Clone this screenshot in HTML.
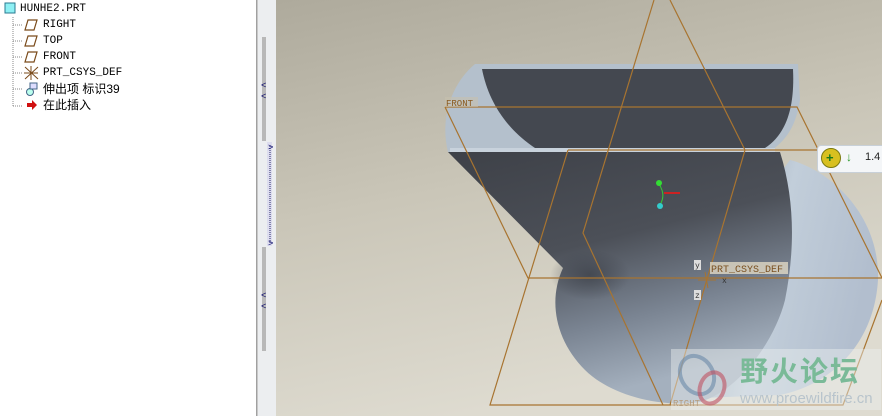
<!DOCTYPE html>
<html><head><meta charset="utf-8"><style>
body{margin:0;width:882px;height:416px;overflow:hidden;position:relative;font-family:"Liberation Mono","Noto Sans CJK SC",monospace;background:#fff}
.tree{position:absolute;left:0;top:0;width:256px;height:416px;background:#fff;border-right:1px solid #a0a0a0}
.it{position:absolute;font-size:11px;color:#000;line-height:14px;white-space:nowrap}
.cj{font-family:"Liberation Sans","Noto Sans CJK SC",sans-serif;font-size:12px}
</style></head><body>
<div class="tree">
<svg width="256" height="120" style="position:absolute;left:0;top:0">
<rect x="5" y="3" width="10" height="10" fill="#8ef0f4" stroke="#2a7a90"/>
<path d="M13 17V106M13 25H22M13 41H22M13 57H22M13 73H22M13 89H22M13 106H22" stroke="#888" stroke-dasharray="1 1" fill="none"/>
<path d="M25 30L28 20H37L34 30Z M25 46L28 36H37L34 46Z M25 62L28 52H37L34 62Z" fill="#fff" stroke="#7a4a1a" stroke-width="1.2"/>
<path d="M25 67L38 79M25 79L38 67M31 66V80M24 73H38" stroke="#7a4a1a"/>
<circle cx="30" cy="92" r="3.5" fill="#bfe" stroke="#468"/><rect x="30" y="83" width="7" height="6" fill="#ddf" stroke="#468"/>
<path d="M27 103h5v-3l5 5-5 5v-3h-5z" fill="#d01010"/>
</svg>
<div class="it" style="left:20px;top:2px">HUNHE2.PRT</div>
<div class="it" style="left:43px;top:18px">RIGHT</div>
<div class="it" style="left:43px;top:34px">TOP</div>
<div class="it" style="left:43px;top:50px">FRONT</div>
<div class="it" style="left:43px;top:66px">PRT_CSYS_DEF</div>
<div class="it cj" style="left:43px;top:82px">伸出项 标识39</div>
<div class="it cj" style="left:43px;top:98px">在此插入</div>
</div>
<div style="position:absolute;left:257px;top:0;width:19px;height:416px;background:#eceef0;border-left:1px solid #c8c8c8"></div>
<svg style="position:absolute;left:257px;top:0" width="19" height="416">
<rect x="5" y="37" width="4" height="104" fill="#b8b8b8"/><rect x="5" y="247" width="4" height="104" fill="#b8b8b8"/>
<rect x="10" y="142" width="5" height="104" fill="#dde"/>
<path d="M13 146V243" stroke="#226" stroke-dasharray="1 1"/>
<text x="4" y="88" font-size="9" fill="#006">&lt;</text><text x="4" y="99" font-size="9" fill="#006">&lt;</text>
<text x="4" y="298" font-size="9" fill="#006">&lt;</text><text x="4" y="309" font-size="9" fill="#006">&lt;</text>
<text x="11" y="150" font-size="9" fill="#006">&gt;</text><text x="11" y="246" font-size="9" fill="#006">&gt;</text>
</svg>
<svg style="position:absolute;left:276px;top:0" width="606" height="416" viewBox="276 0 606 416">
<defs>
<linearGradient id="bg" x1="0" y1="0" x2="0.3" y2="1"><stop offset="0" stop-color="#aeaa9c"/><stop offset="0.5" stop-color="#cac6b8"/><stop offset="1" stop-color="#dedbd0"/></linearGradient>
<linearGradient id="bd" x1="0" y1="0" x2="0.35" y2="1"><stop offset="0" stop-color="#3e4148"/><stop offset="0.45" stop-color="#4c5058"/><stop offset="0.75" stop-color="#7a8492"/><stop offset="1" stop-color="#a4b0be"/></linearGradient>
<linearGradient id="rt" x1="0" y1="0" x2="1" y2="0.3"><stop offset="0" stop-color="#8c98a8"/><stop offset="0.5" stop-color="#c2ceda"/><stop offset="1" stop-color="#b2bece"/></linearGradient>
<radialGradient id="sh" cx="0.5" cy="0.5" r="0.5"><stop offset="0" stop-color="#3a3e46" stop-opacity=".7"/><stop offset="1" stop-color="#3a3e46" stop-opacity="0"/></radialGradient>
</defs>
<rect x="276" y="0" width="606" height="416" fill="url(#bg)"/>
<!-- right light cylinder -->
<path d="M790 160 C830 170 880 215 878 280 C874 345 830 385 780 395 L700 398 L760 200Z" fill="url(#rt)"/>
<!-- body + bulb -->
<path d="M448 152 L780 152 C795 200 795 250 785 300 C775 340 740 390 700 402 C660 408 610 395 585 370 C555 340 548 300 563 268 Z" fill="url(#bd)"/>
<ellipse cx="590" cy="275" rx="40" ry="25" fill="url(#sh)"/>
<!-- rim / top -->
<path d="M475 64 L798 64 L800 100 C795 130 785 140 770 152 L448 152 C440 120 450 85 475 64Z" fill="#b4c0cc"/>
<path d="M482 69 L793 69 C795 110 785 135 765 148 L535 148 C505 128 488 100 482 69Z" fill="#444850"/>
<path d="M450 150 L775 150" stroke="#c8d2dc" stroke-width="4"/>
<g stroke="#a87430" stroke-width="1.2" fill="none">
<path d="M445 107 L797 107 L882 278 M445 107 L528 278 L882 278"/>
<path d="M568 150 L882 150 M568 150 L490 405 L843 405 L882 300"/>
<path d="M654 0 L583 233 L663 405 M670 0 L745 150 L670 405"/>
</g>
<rect x="445" y="97" width="33" height="10" fill="#c6c0ae" opacity=".6"/>
<text x="446" y="106" font-size="9" font-family="Liberation Mono" fill="#8a5a20">FRONT</text>
<rect x="710" y="262" width="78" height="12" fill="#e0d8c4" opacity=".8"/>
<text x="711" y="272" font-size="10" font-family="Liberation Mono" fill="#7a5020">PRT_CSYS_DEF</text>
<rect x="694" y="260" width="7" height="10" fill="#ddd"/><text x="695" y="268" font-size="8" fill="#333">y</text>
<rect x="694" y="290" width="7" height="10" fill="#ddd"/><text x="695" y="298" font-size="8" fill="#333">z</text>
<text x="722" y="283" font-size="8" fill="#333">x</text>
<path d="M705 272 L708 288 M698 280 L716 280" stroke="#a87430"/>
<path d="M659 184 C664 192 664 198 660 205" stroke="#3c3" fill="none"/><circle cx="659" cy="183" r="3" fill="#3d3"/><circle cx="660" cy="206" r="3" fill="#3cc"/>
<path d="M664 193 H680" stroke="#c22" stroke-width="2"/>
<text x="673" y="406" font-size="9" font-family="Liberation Mono" fill="#8a5a20">RIGHT</text>
</svg>
<div style="position:absolute;left:817px;top:145px;width:70px;height:26px;background:#f4f6f8;border:1px solid #c8d0d8;border-radius:4px"></div>
<div style="position:absolute;left:821px;top:148px;width:18px;height:18px;border-radius:50%;background:#d8c020;border:1px solid #7a7a10"></div>
<div style="position:absolute;left:826px;top:150px;color:#1a7a1a;font:bold 13px 'Liberation Sans'">+</div>
<div style="position:absolute;left:846px;top:150px;color:#2a9a2a;font:bold 12px 'Liberation Sans'">↓</div>
<div style="position:absolute;left:865px;top:151px;font:11px 'Liberation Sans';color:#222">1.4</div>
<div style="position:absolute;left:671px;top:349px;width:210px;height:61px;background:rgba(235,240,240,.45)"></div>
<svg style="position:absolute;left:672px;top:350px" width="70" height="60"><ellipse cx="25" cy="25" rx="16" ry="20" fill="none" stroke="#6a88a8" stroke-width="4" opacity=".6" transform="rotate(-30 25 25)"/><ellipse cx="40" cy="38" rx="12" ry="16" fill="none" stroke="#c05060" stroke-width="4" opacity=".6" transform="rotate(20 40 38)"/></svg>
<div style="position:absolute;left:740px;top:350px;font:bold 28px 'Noto Sans CJK SC',sans-serif;color:#7aba98;letter-spacing:2px">野火论坛</div>
<div style="position:absolute;left:740px;top:390px;font:15px 'Liberation Sans';color:#b8c4cc">www.proewildfire.cn</div>
</body></html>
